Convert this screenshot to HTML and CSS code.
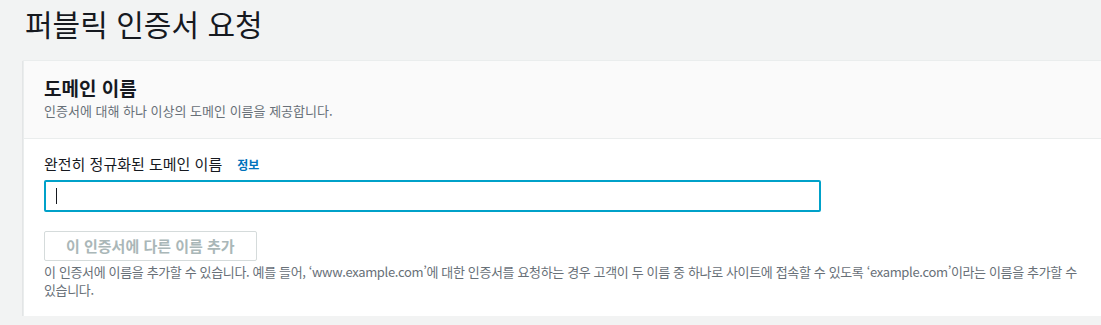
FILE: index.html
```html
<!DOCTYPE html>
<html lang="ko">
<head>
<meta charset="utf-8">
<link rel="stylesheet" href="styles.css">
</head>
<body>
<div class="page">
  <h1 class="page-title">퍼블릭 인증서 요청</h1>
  <section class="card">
    <header class="card-header">
      <h2 class="card-title">도메인 이름</h2>
      <p class="card-desc">인증서에 대해 하나 이상의 도메인 이름을 제공합니다.</p>
    </header>
    <div class="card-body">
      <div class="field-label">
        <span>완전히 정규화된 도메인 이름</span>
        <a class="info-link" href="#">정보</a>
      </div>
      <div class="input-box"><span class="caret"></span></div>
      <button class="btn-disabled" type="button">이 인증서에 다른 이름 추가</button>
      <p class="help">이 인증서에 이름을 추가할 수 있습니다. 예를 들어, ‘www.example.com’에 대한 인증서를 요청하는 경우 고객이 두 이름 중 하나로 사이트에 접속할 수 있도록 ‘example.com’이라는 이름을 추가할 수 있습니다.</p>
    </div>
  </section>
</div>
</body>
</html>
```
FILE: styles.css
```css
html, body {
  margin: 0;
  padding: 0;
  background: #f2f3f3;
  overflow: hidden;
}
body {
  font-family: "Noto Sans CJK KR", "Noto Sans", sans-serif;
  color: #16191f;
  word-break: keep-all;
}
.page {
  padding-left: 23px;
  margin-right: -20px;
}
.page-title {
  margin: 0;
  font-size: 30px;
  font-weight: 400;
  line-height: 46px;
  padding-left: 2px;
  color: #16191f;
}
.card {
  margin-top: 14px;
  background: #fff;
  border-top: 1px solid #eaeded;
  border-left: 1px solid #eaeded;
  box-shadow: 0 1px 1px 0 rgba(0, 28, 36, 0.35);
}
.card-header {
  background: #fafafa;
  border-bottom: 1px solid #eaeded;
  padding: 13px 20px 19px;
}
.card-title {
  margin: 0;
  font-size: 19px;
  font-weight: 700;
  line-height: 27px;
}
.card-desc {
  margin: 1px 0 0;
  font-size: 13px;
  line-height: 17px;
  color: #687078;
}
.card-body {
  padding: 14px 20px 17px;
}
.field-label {
  display: flex;
  align-items: baseline;
  gap: 15px;
  font-size: 15px;
  line-height: 22px;
}
.info-link {
  font-size: 12px;
  font-weight: 700;
  color: #0073bb;
  text-decoration: none;
}
.input-box {
  margin-top: 4px;
  width: 763px;
  height: 28px;
  border: 2px solid #00a1c9;
  border-radius: 2px;
  background: #fff;
  display: flex;
  align-items: center;
  padding-left: 10px;
}
.caret {
  display: block;
  width: 1px;
  height: 16px;
  background: #16191f;
}
.btn-disabled {
  margin-top: 19px;
  display: block;
  height: 30px;
  padding: 0 21px;
  background: #fff;
  border: 1px solid #d5dbdb;
  border-radius: 2px;
  color: #aab7b8;
  font-family: inherit;
  font-size: 15px;
  font-weight: 700;
  line-height: 28px;
}
.help {
  margin: 2px 0 0;
  font-size: 13px;
  line-height: 18px;
  letter-spacing: -0.36px;
  color: #687078;
}
```
